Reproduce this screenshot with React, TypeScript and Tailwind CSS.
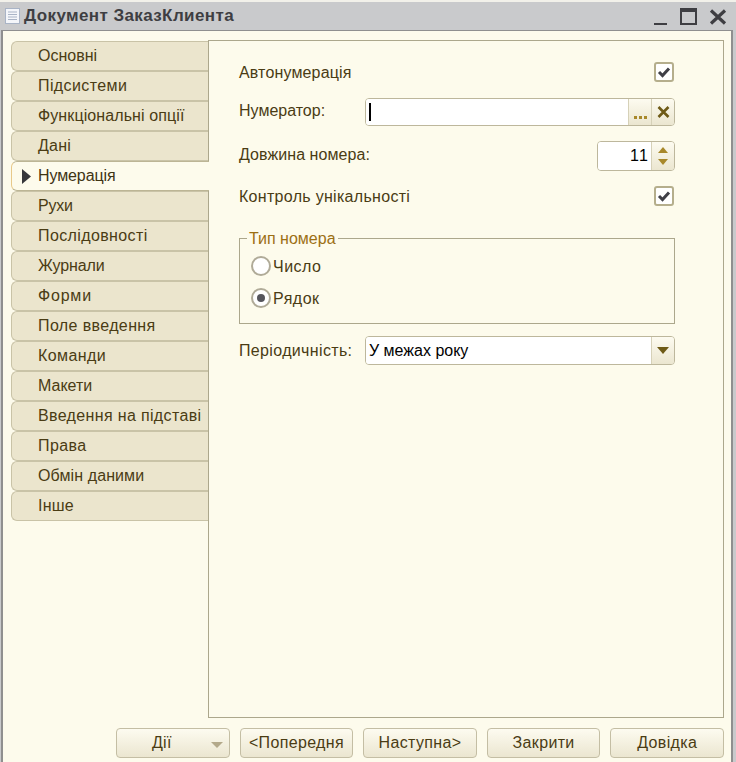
const tabs: [string, string][] = [
  ["Основні", "tracking-[0px]"],
  ["Підсистеми", "tracking-[0.4px]"],
  ["Функціональні опції", "tracking-[0.1px]"],
  ["Дані", "tracking-[0.2px]"],
  ["Нумерація", "tracking-[-0.1px]"],
  ["Рухи", "tracking-[-0.2px]"],
  ["Послідовності", "tracking-[0.38px]"],
  ["Журнали", "tracking-[-0.1px]"],
  ["Форми", "tracking-[0.8px]"],
  ["Поле введення", "tracking-[0.38px]"],
  ["Команди", "tracking-[0.4px]"],
  ["Макети", "tracking-[0px]"],
  ["Введення на підставі", "tracking-[0.35px]"],
  ["Права", "tracking-[0.4px]"],
  ["Обмін даними", "tracking-[0.1px]"],
  ["Інше", "tracking-[0.2px]"],
];

function Check() {
  return (
    <div className="w-5 h-5 rounded-[3px] border-2 border-[#b5ae8c] bg-white flex items-center justify-center">
      <svg width="14" height="12" viewBox="0 0 14 12"><path d="M2 6 L5.5 9.5 L12 2.5" fill="none" stroke="#3f3f46" strokeWidth="3" /></svg>
    </div>
  );
}

function Radio({ on, label }: { on?: boolean; label: string }) {
  return (
    <div className="flex items-center h-[32px]">
      <div className="w-[20px] h-[20px] rounded-full border-2 border-[#b0ab98] bg-white flex items-center justify-center">
        {on && <div className="w-2 h-2 rounded-full bg-[#55555c]" />}
      </div>
      <span className="ml-[2px] mt-[2px] text-[#4a3c14] tracking-[0.5px]">{label}</span>
    </div>
  );
}

function Btn({ label, arrow }: { label: string; arrow?: boolean }) {
  return (
    <div className="relative w-[113.6px] h-[30px] rounded-[4px] border border-[#c4bea4] bg-gradient-to-b from-[#fdfbf0] to-[#ebe6d0] flex items-center justify-center text-[#4a3c14] tracking-[0.35px]">
      <span className={arrow ? "mr-[22px]" : ""}>{label}</span>
      {arrow && (
        <svg className="absolute right-[6px] top-[13px]" width="12" height="6" viewBox="0 0 12 6"><path d="M0 0 H12 L6 6 Z" fill="#b3a98a" /></svg>
      )}
    </div>
  );
}

export default function App() {
  return (
    <div className="w-[736px] h-[762px] overflow-hidden bg-[#c9cacc] flex flex-col text-[16px] leading-[20px] border-t-2 border-[#f2f1ea]" style={{ fontFamily: '"Liberation Sans", Arial, sans-serif' }}>
      <div className="h-[28px] shrink-0 flex items-center pl-[5px] pr-[9px]">
        <svg width="15" height="16" viewBox="0 0 15 16" className="mr-[4px]">
          <rect x="0.5" y="0.5" width="14" height="15" fill="#f4f6fa" stroke="#a9b4c6" />
          <path d="M3 4H12M3 6.5H12M3 9H12M3 11.5H12" stroke="#a9b4c6" />
        </svg>
        <span className="font-bold text-[#3e3e42] text-[17px] tracking-[0.4px]">Документ ЗаказКлиента</span>
        <div className="ml-auto flex items-end h-[18px]">
          <div className="w-[13px] h-[2px] bg-[#3e3e42] mr-[13px]" />
          <div className="w-[17px] h-[17px] border-2 border-t-[4px] border-[#3e3e42] mr-[12px]" />
          <svg width="18" height="16" viewBox="0 0 18 16"><path d="M2 1.5 L16 14.5 M16 1.5 L2 14.5" stroke="#3e3e42" strokeWidth="3.2" /></svg>
        </div>
      </div>
      <div className="flex-1 ml-[1px] mr-[3px] border-x-2 border-x-[#8f8f8f] bg-[#fdfbec] flex flex-col pl-[8px] pr-[7px] pt-[9px] min-h-0 border-t border-t-[#8f8f8f]">
        <div className="flex h-[678px] shrink-0">
          <div className="w-[198px] shrink-0 pt-px">
            {tabs.map(([t, track]) =>
              t === "Нумерація" ? (
                <div key={t} className={`relative z-10 h-[30px] w-[198px] -mr-px rounded-l-[6px] bg-[#fdfbec] border-l border-l-[#e8c98a] border-y border-y-[#bcb595] flex items-center pl-[26px] text-[#3f3414] ${track}`}>
                  <svg className="absolute left-[10px] top-[7px]" width="9" height="15" viewBox="0 0 9 15"><path d="M0 0 L9 7.5 L0 15 Z" fill="#36363a" /></svg>
                  {t}
                </div>
              ) : (
                <div key={t} className={`h-[30px] w-[197px] rounded-l-[6px] bg-[#ebe5cd] border-l border-y border-[#c9c3a7] flex items-center pl-[26px] text-[#4a3c14] ${track}`}>
                  {t}
                </div>
              )
            )}
          </div>
          <div className="flex-1 border border-[#aca78c] bg-[#fdfbec] pl-[30px] pr-[48px] pt-[21px] -ml-px">
            <div className="flex items-center justify-between h-[20px] text-[#4a3c14]">
              <span className="tracking-[0.15px] mt-[2px]">Автонумерація</span>
              <div className="mr-[1px]"><Check /></div>
            </div>
            <div className="flex items-center mt-[16px] h-[28px] text-[#4a3c14]">
              <span className="w-[126px] -mt-[2px]">Нумератор:</span>
              <div className="flex-1 h-[28px] rounded-[4px] border border-[#bdb79c] flex overflow-hidden">
                <div className="flex-1 bg-white flex items-center pl-[3px]"><div className="w-[1.5px] h-[18px] bg-black" /></div>
                <div className="w-[23px] bg-gradient-to-b from-[#fdfbf0] to-[#ebe6d0] border-l border-[#d6d1b8] flex items-end justify-center pb-[6px] gap-[2px]">
                  <i className="w-[3px] h-[3px] bg-[#a8882a]" /><i className="w-[3px] h-[3px] bg-[#a8882a]" /><i className="w-[3px] h-[3px] bg-[#a8882a]" />
                </div>
                <div className="w-[23px] bg-gradient-to-b from-[#fdfbf0] to-[#ebe6d0] border-l border-[#d6d1b8] flex items-center justify-center">
                  <svg width="13" height="12" viewBox="0 0 13 12"><path d="M1.5 1 L11.5 11 M11.5 1 L1.5 11" stroke="#6e5a16" strokeWidth="2.6" /></svg>
                </div>
              </div>
            </div>
            <div className="flex items-center justify-between mt-[15px] h-[30px] text-[#4a3c14]">
              <span className="-mt-[2px] tracking-[0.07px]">Довжина номера:</span>
              <div className="w-[78px] h-[30px] rounded-[4px] border border-[#bdb79c] flex overflow-hidden">
                <div className="flex-1 bg-white flex items-center justify-end pr-[2px] text-black tracking-[1.2px]">11</div>
                <div className="w-[23px] bg-gradient-to-b from-[#fdfbf0] to-[#ebe6d0] border-l border-[#d6d1b8] flex flex-col items-center justify-center gap-[6px]">
                  <svg width="10" height="6" viewBox="0 0 10 6"><path d="M0 6 H10 L5 0 Z" fill="#a8882a" /></svg>
                  <svg width="10" height="6" viewBox="0 0 10 6"><path d="M0 0 H10 L5 6 Z" fill="#a8882a" /></svg>
                </div>
              </div>
            </div>
            <div className="flex items-center justify-between mt-[15px] h-[20px] text-[#4a3c14]">
              <span className="tracking-[0.3px] mt-[2px]">Контроль унікальності</span>
              <div className="mr-[1px]"><Check /></div>
            </div>
            <div className="relative mt-[32px] h-[86px] border border-[#aca78c] pl-[11px] pt-[11px]">
              <span className="absolute left-[7px] -top-[10px] bg-[#fdfbec] px-[2px] text-[#9c6f14]">Тип номера</span>
              <Radio label="Число" />
              <Radio on label="Рядок" />
            </div>
            <div className="flex items-center mt-[12px] h-[29px] text-[#4a3c14]">
              <span className="w-[126px] tracking-[0.35px]">Періодичність:</span>
              <div className="flex-1 h-[29px] rounded-[4px] border border-[#bdb79c] flex overflow-hidden">
                <div className="flex-1 bg-white flex items-center pl-[3px] text-black">У межах року</div>
                <div className="w-[23px] bg-gradient-to-b from-[#fdfbf0] to-[#ebe6d0] border-l border-[#d6d1b8] flex items-center justify-center">
                  <svg width="12" height="7" viewBox="0 0 12 7"><path d="M0 0 H12 L6 7 Z" fill="#6e5a16" /></svg>
                </div>
              </div>
            </div>
          </div>
        </div>
        <div className="flex justify-end gap-[10px] mt-[10px]">
          <Btn label="Дії" arrow />
          <Btn label="<Попередня" />
          <Btn label="Наступна>" />
          <Btn label="Закрити" />
          <Btn label="Довідка" />
        </div>
      </div>
    </div>
  );
}
